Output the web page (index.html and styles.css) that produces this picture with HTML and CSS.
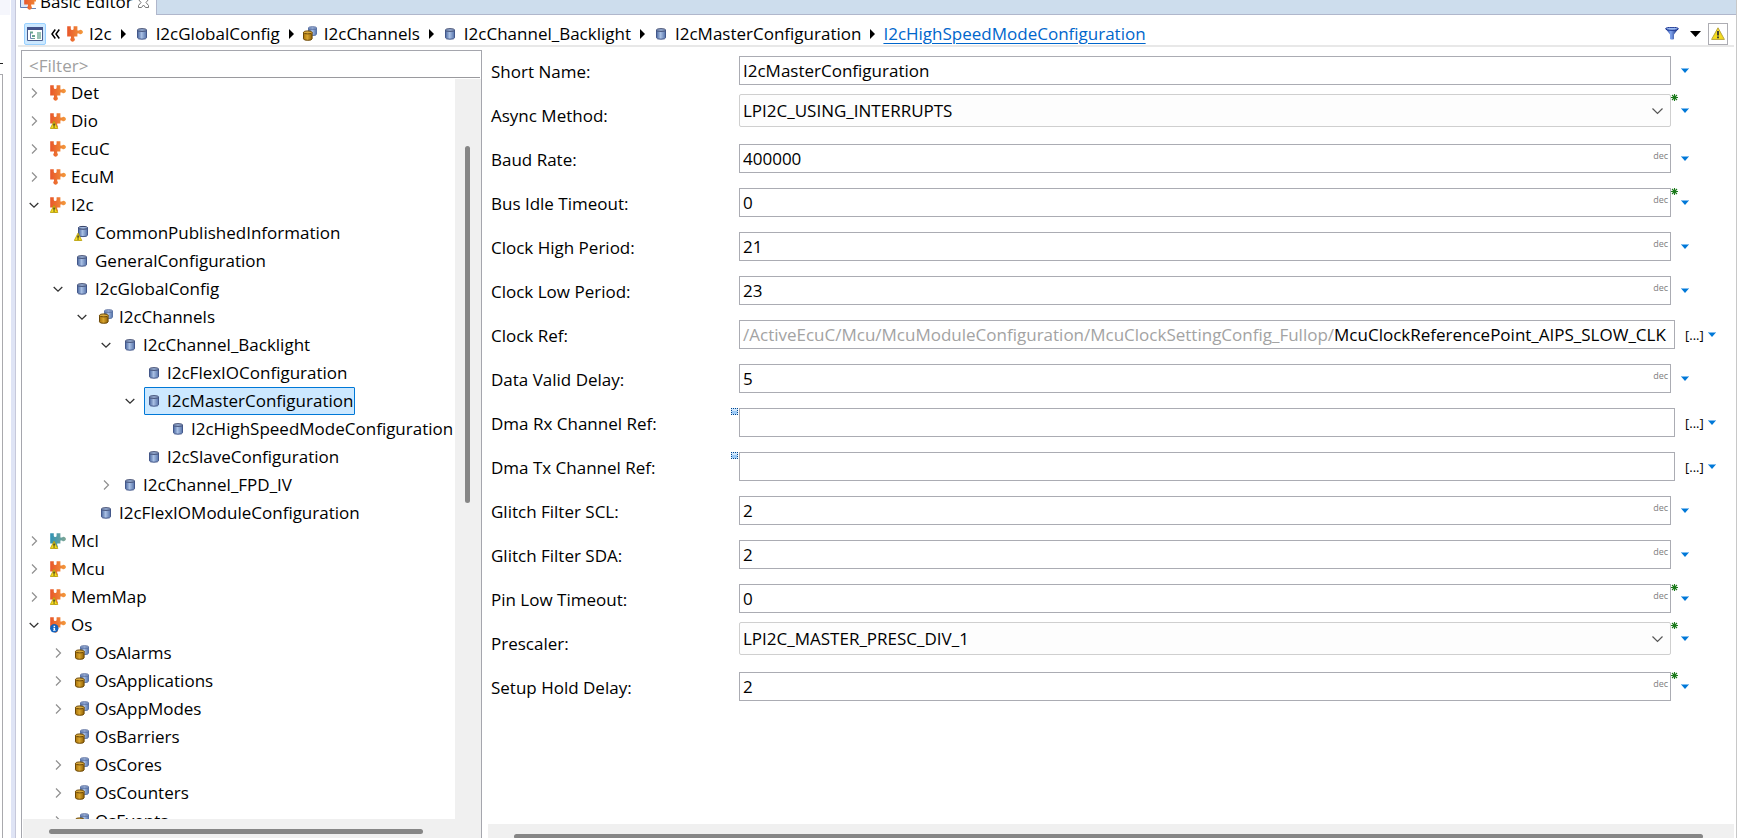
FILE: index.html
```
<!DOCTYPE html>
<html lang="en">
<head>
  <meta charset="UTF-8" />
  <title>Basic Editor</title>
  <link rel="stylesheet" href="styles.css">
</head>
<body>
  <!-- icon set -->
  <svg class="defs" width="0" height="0" aria-hidden="true">
    <defs>
      <linearGradient id="g-orange" x1="0" x2="1"><stop offset="0" stop-color="#e8562a"/><stop offset="1" stop-color="#f39a3c"/></linearGradient>
      <linearGradient id="g-teal" x1="0" x2="1"><stop offset="0" stop-color="#2f93b5"/><stop offset="1" stop-color="#7fa694"/></linearGradient>
      <linearGradient id="g-blue" x1="0" x2="1"><stop offset="0" stop-color="#4a679f"/><stop offset="0.45" stop-color="#a9c0e4"/><stop offset="1" stop-color="#5673aa"/></linearGradient>
      <linearGradient id="g-gold" x1="0" x2="1"><stop offset="0" stop-color="#a87208"/><stop offset="0.45" stop-color="#d9a52f"/><stop offset="1" stop-color="#916206"/></linearGradient>
      <linearGradient id="g-funnel" x1="0" x2="1"><stop offset="0" stop-color="#16308f"/><stop offset="0.4" stop-color="#7fa4ee"/><stop offset="1" stop-color="#0c1f6e"/></linearGradient>
      <path id="puzzle" d="M0.2 0.3h3.6v2.4a1.4 1.4 0 0 0 2.8 0V0.3h3.800v4.200h1.600a2.200 2.200 0 1 1 0 3h-1.600v3H7.200v1.500a2.200 2.200 0 1 1-3.200 0v-1.500H0.200z"/>
      <g id="warn">
        <path d="M4 8.2 7.8 15.5H0.3z" fill="#f5dc1e" stroke="#b59b00" stroke-width="0.8"/>
        <path d="M3.4 10.4h1.3v2.4H3.4zM3.4 13.4h1.3v1.2H3.4z" fill="#222"/>
      </g>
    </defs>
    <symbol id="i-module" viewBox="0 0 16 16"><use href="#puzzle" fill="url(#g-orange)"/></symbol>
    <symbol id="i-module-warn" viewBox="0 0 16 16"><use href="#puzzle" fill="url(#g-orange)"/><use href="#warn"/></symbol>
    <symbol id="i-module-teal" viewBox="0 0 16 16"><use href="#puzzle" fill="url(#g-teal)"/><use href="#warn"/></symbol>
    <symbol id="i-module-info" viewBox="0 0 16 16">
      <use href="#puzzle" fill="url(#g-orange)"/>
      <circle cx="4.3" cy="11.3" r="4.2" fill="#1262bd"/>
      <path d="M3.6 8.8h1.5v1.2H3.6zM3.2 10.7h1.9v2.2h.5v.9H3.1v-.9h.5v-1.3h-.4z" fill="#fff"/>
    </symbol>
    <symbol id="i-item" viewBox="0 0 16 16">
      <path d="M3.5 4v7.8q0 1.400 4.500 1.400t4.500-1.400V4z" fill="url(#g-blue)" stroke="#43578a"/>
      <ellipse cx="8" cy="4" rx="4.500" ry="1.300" fill="#a3bbe0" stroke="#343f66"/>
    </symbol>
    <symbol id="i-item-warn" viewBox="0 0 16 16">
      <path d="M4.500 2.600v7.600q0 1.400 4.500 1.400t4.500-1.400V2.600z" fill="url(#g-blue)" stroke="#43578a"/>
      <ellipse cx="9" cy="2.800" rx="4.500" ry="1.400" fill="#a3bbe0" stroke="#343f66"/>
      <use href="#warn"/>
    </symbol>
    <symbol id="i-group" viewBox="0 0 16 16">
      <path d="M6.500 2v6.200q0 1.300 4 1.300t4-1.300V2z" fill="url(#g-blue)" stroke="#5b76a8"/>
      <ellipse cx="10.500" cy="2" rx="4" ry="1.200" fill="#a9c1e6" stroke="#4a5f93"/>
      <path d="M1.500 6.500v6.300q0 1.500 4.300 1.500t4.300-1.500V6.500z" fill="url(#g-gold)" stroke="#6b4706"/>
      <ellipse cx="5.800" cy="6.400" rx="4.300" ry="1.500" fill="#d9a93a" stroke="#6b4706"/>
    </symbol>
    <symbol id="i-right" viewBox="0 0 10 10"><path d="M3 0.5 7.5 5 3 9.5" fill="none" stroke="#8f8f8f" stroke-width="1.2"/></symbol>
    <symbol id="i-down" viewBox="0 0 10 10"><path d="M0.7 3 5 7.2 9.3 3" fill="none" stroke="#333" stroke-width="1.3"/></symbol>
    <symbol id="i-sep" viewBox="0 0 5 10"><path d="M0 0v10l5-5z"/></symbol>
    <symbol id="i-menu" viewBox="0 0 8 5"><path d="M0 0h8v1H0z" fill="#7fbdf0"/><path d="M0.5 1h7L4 5z" fill="#0078d7"/></symbol>
    <symbol id="i-star" viewBox="0 0 7 7"><path d="M3.5 0v7M0 3.5h7M1 1l5 5M6 1 1 6" stroke="#1b7a1b" stroke-width="1.1"/></symbol>
    <symbol id="i-optional" viewBox="0 0 7 7">
      <path d="M0 0h7v7H0z" fill="#cfe6fc"/>
      <path d="M1 3h5v3H1z" fill="#9ccbf8"/>
      <path d="M0 0h1v1H0zM2 0h1v1H2zM4 0h1v1H4zM6 0h1v1H6zM0 2h1v1H0zM6 2h1v1H6zM0 4h1v1H0zM6 4h1v1H6zM0 6h1v1H0zM2 6h1v1H2zM4 6h1v1H4zM6 6h1v1H6z" fill="#00478f"/>
    </symbol>
  </svg>

  <div class="app">
    <div class="side-view">
      <div class="side-tab"></div>
      <div class="side-mark"></div>
      <div class="side-body"></div>
    </div>
    <main class="editor">
      <div class="tabs">
        <div class="tab">
          <svg width="16" height="16" viewBox="0 0 16 16"><path d="M0.500 1.500h10v12h-10z" fill="#dbe8f8" stroke="#5f7db5"/><path d="M11 14.500h5" stroke="#6b86b5"/><use href="#puzzle" x="4" fill="url(#g-orange)"/></svg>
          <span>Basic Editor</span>
          <button class="close" aria-label="Close"><svg width="11" height="11" viewBox="0 0 11 11"><path d="M0.5 0.5h3l2 2.5 2-2.5h3v2L8 5.500l2.500 3v2h-3l-2-2.500-2 2.500h-3v-2L3 5.500 0.500 2.500z" fill="#fff" stroke="#777"/></svg></button>
        </div>
      </div>

      <nav class="crumbs">
        <button class="tree-toggle" aria-label="Show tree">
          <svg width="16" height="14" viewBox="0 0 16 14"><path d="M0.5 0.500h15v13h-15z" fill="#fff" stroke="#4a5c8c"/><path d="M0 0h16v3H0z" fill="#42528a"/><path d="M3 4.500h3v2H3zM5 8h3v2H5zM5 11h3v1H5z" fill="#6aa58e"/><path d="M10 5h4v7h-4z" fill="#9ac3b4"/><path d="M3.500 6v5.500H6" fill="none" stroke="#6f86b0"/></svg>
        </button>
        <button class="back" aria-label="Back"><svg width="9" height="10" viewBox="0 0 9 10"><path d="M4.300 0.500 1 5l3.300 4.500M8.300 0.500 5 5l3.300 4.500" fill="none" stroke="#000" stroke-width="1.500"/></svg></button>
        <span class="crumb"><svg class="icon"><use href="#i-module"/></svg>I2c</span>
        <svg class="sep"><use href="#i-sep"/></svg>
        <span class="crumb"><svg class="icon"><use href="#i-item"/></svg>I2cGlobalConfig</span>
        <svg class="sep"><use href="#i-sep"/></svg>
        <span class="crumb"><svg class="icon"><use href="#i-group"/></svg>I2cChannels</span>
        <svg class="sep"><use href="#i-sep"/></svg>
        <span class="crumb"><svg class="icon"><use href="#i-item"/></svg>I2cChannel_Backlight</span>
        <svg class="sep"><use href="#i-sep"/></svg>
        <span class="crumb"><svg class="icon"><use href="#i-item"/></svg>I2cMasterConfiguration</span>
        <svg class="sep"><use href="#i-sep"/></svg>
        <a href="#">I2cHighSpeedModeConfiguration</a>
        <div class="tools">
          <button aria-label="Filter"><svg width="14" height="13" viewBox="0 0 14 13"><path d="M0.500 1.500 5 7.500V12q2 1 4 0V7.500l4.500-6z" fill="url(#g-funnel)"/><ellipse cx="7" cy="1.800" rx="6.500" ry="1.500" fill="#9dbcf2" stroke="#16308f"/></svg></button>
          <button aria-label="View menu"><svg width="11" height="6" viewBox="0 0 11 6"><path d="M0 0h11L5.500 6z"/></svg></button>
          <button class="problems" aria-label="Problems"><svg width="14" height="13" viewBox="0 0 14 13"><path d="M7 0.800 13.400 12.400H0.600z" fill="#f5dc1e" stroke="#b8a53c" stroke-linejoin="round"/><path d="M6.100 4h1.800v4.500H6.100zM6.100 9.500h1.800v1.700H6.100z" fill="#333"/></svg></button>
        </div>
      </nav>

      <div class="content">
        <section class="tree-pane">
          <input class="filter" type="text" placeholder="&lt;Filter&gt;" aria-label="Filter">
          <div class="tree-area">
            <ul class="tree">
              <li><div class="row"><button aria-label="Expand"><svg><use href="#i-right"/></svg></button><span class="node"><svg class="icon"><use href="#i-module"/></svg>Det</span></div></li>
              <li><div class="row"><button aria-label="Expand"><svg><use href="#i-right"/></svg></button><span class="node"><svg class="icon"><use href="#i-module-warn"/></svg>Dio</span></div></li>
              <li><div class="row"><button aria-label="Expand"><svg><use href="#i-right"/></svg></button><span class="node"><svg class="icon"><use href="#i-module"/></svg>EcuC</span></div></li>
              <li><div class="row"><button aria-label="Expand"><svg><use href="#i-right"/></svg></button><span class="node"><svg class="icon"><use href="#i-module"/></svg>EcuM</span></div></li>
              <li><div class="row"><button aria-label="Collapse"><svg><use href="#i-down"/></svg></button><span class="node"><svg class="icon"><use href="#i-module-warn"/></svg>I2c</span></div>
                <ul>
                  <li><div class="row leaf"><span class="node"><svg class="icon"><use href="#i-item-warn"/></svg>CommonPublishedInformation</span></div></li>
                  <li><div class="row leaf"><span class="node"><svg class="icon"><use href="#i-item"/></svg>GeneralConfiguration</span></div></li>
                  <li><div class="row"><button aria-label="Collapse"><svg><use href="#i-down"/></svg></button><span class="node"><svg class="icon"><use href="#i-item"/></svg>I2cGlobalConfig</span></div>
                    <ul>
                      <li><div class="row"><button aria-label="Collapse"><svg><use href="#i-down"/></svg></button><span class="node"><svg class="icon"><use href="#i-group"/></svg>I2cChannels</span></div>
                        <ul>
                          <li><div class="row"><button aria-label="Collapse"><svg><use href="#i-down"/></svg></button><span class="node"><svg class="icon"><use href="#i-item"/></svg>I2cChannel_Backlight</span></div>
                            <ul>
                              <li><div class="row leaf"><span class="node"><svg class="icon"><use href="#i-item"/></svg>I2cFlexIOConfiguration</span></div></li>
                              <li><div class="row"><button aria-label="Collapse"><svg><use href="#i-down"/></svg></button><span class="node selected"><svg class="icon"><use href="#i-item"/></svg>I2cMasterConfiguration</span></div>
                                <ul>
                                  <li><div class="row leaf"><span class="node"><svg class="icon"><use href="#i-item"/></svg>I2cHighSpeedModeConfiguration</span></div></li>
                                </ul>
                              </li>
                              <li><div class="row leaf"><span class="node"><svg class="icon"><use href="#i-item"/></svg>I2cSlaveConfiguration</span></div></li>
                            </ul>
                          </li>
                          <li><div class="row"><button aria-label="Expand"><svg><use href="#i-right"/></svg></button><span class="node"><svg class="icon"><use href="#i-item"/></svg>I2cChannel_FPD_IV</span></div></li>
                        </ul>
                      </li>
                      <li><div class="row leaf"><span class="node"><svg class="icon"><use href="#i-item"/></svg>I2cFlexIOModuleConfiguration</span></div></li>
                    </ul>
                  </li>
                </ul>
              </li>
              <li><div class="row"><button aria-label="Expand"><svg><use href="#i-right"/></svg></button><span class="node"><svg class="icon"><use href="#i-module-teal"/></svg>Mcl</span></div></li>
              <li><div class="row"><button aria-label="Expand"><svg><use href="#i-right"/></svg></button><span class="node"><svg class="icon"><use href="#i-module-warn"/></svg>Mcu</span></div></li>
              <li><div class="row"><button aria-label="Expand"><svg><use href="#i-right"/></svg></button><span class="node"><svg class="icon"><use href="#i-module-warn"/></svg>MemMap</span></div></li>
              <li><div class="row"><button aria-label="Collapse"><svg><use href="#i-down"/></svg></button><span class="node"><svg class="icon"><use href="#i-module-info"/></svg>Os</span></div>
                <ul>
                  <li><div class="row"><button aria-label="Expand"><svg><use href="#i-right"/></svg></button><span class="node"><svg class="icon"><use href="#i-group"/></svg>OsAlarms</span></div></li>
                  <li><div class="row"><button aria-label="Expand"><svg><use href="#i-right"/></svg></button><span class="node"><svg class="icon"><use href="#i-group"/></svg>OsApplications</span></div></li>
                  <li><div class="row"><button aria-label="Expand"><svg><use href="#i-right"/></svg></button><span class="node"><svg class="icon"><use href="#i-group"/></svg>OsAppModes</span></div></li>
                  <li><div class="row leaf"><span class="node"><svg class="icon"><use href="#i-group"/></svg>OsBarriers</span></div></li>
                  <li><div class="row"><button aria-label="Expand"><svg><use href="#i-right"/></svg></button><span class="node"><svg class="icon"><use href="#i-group"/></svg>OsCores</span></div></li>
                  <li><div class="row"><button aria-label="Expand"><svg><use href="#i-right"/></svg></button><span class="node"><svg class="icon"><use href="#i-group"/></svg>OsCounters</span></div></li>
                  <li><div class="row"><button aria-label="Expand"><svg><use href="#i-right"/></svg></button><span class="node"><svg class="icon"><use href="#i-group"/></svg>OsEvents</span></div></li>
                </ul>
              </li>
            </ul>
            <div class="vscroll"><div class="thumb"></div></div>
          </div>
          <div class="hscroll"><div class="thumb"></div></div>
        </section>

        <section class="form-pane">
          <form class="form">
            <div class="line">
              <label for="short-name">Short Name:</label>
              <div class="field"><input id="short-name" type="text" value="I2cMasterConfiguration"></div>
              <div class="actions"><button type="button" aria-label="Menu"><svg><use href="#i-menu"/></svg></button></div>
            </div>
            <div class="line combo">
              <label for="async">Async Method:</label>
              <div class="field"><select id="async"><option>LPI2C_USING_INTERRUPTS</option></select><svg class="chevron" viewBox="0 0 11 7"><path d="M0.500 0.500 5.500 5.500l5-5"/></svg><svg class="star"><use href="#i-star"/></svg></div>
              <div class="actions"><button type="button" aria-label="Menu"><svg><use href="#i-menu"/></svg></button></div>
            </div>
            <div class="line">
              <label for="baud">Baud Rate:</label>
              <div class="field"><input id="baud" type="text" value="400000"><span class="dec">dec</span></div>
              <div class="actions"><button type="button" aria-label="Menu"><svg><use href="#i-menu"/></svg></button></div>
            </div>
            <div class="line">
              <label for="idle">Bus Idle Timeout:</label>
              <div class="field"><input id="idle" type="text" value="0"><span class="dec">dec</span><svg class="star"><use href="#i-star"/></svg></div>
              <div class="actions"><button type="button" aria-label="Menu"><svg><use href="#i-menu"/></svg></button></div>
            </div>
            <div class="line">
              <label for="high">Clock High Period:</label>
              <div class="field"><input id="high" type="text" value="21"><span class="dec">dec</span></div>
              <div class="actions"><button type="button" aria-label="Menu"><svg><use href="#i-menu"/></svg></button></div>
            </div>
            <div class="line">
              <label for="low">Clock Low Period:</label>
              <div class="field"><input id="low" type="text" value="23"><span class="dec">dec</span></div>
              <div class="actions"><button type="button" aria-label="Menu"><svg><use href="#i-menu"/></svg></button></div>
            </div>
            <div class="line ref">
              <label for="clock-ref">Clock Ref:</label>
              <div class="field"><span class="path">/ActiveEcuC/Mcu/McuModuleConfiguration/McuClockSettingConfig_Fullop/</span><input id="clock-ref" type="text" value="McuClockReferencePoint_AIPS_SLOW_CLK"></div>
              <div class="actions"><button type="button" class="browse">[...]</button><button type="button" aria-label="Menu"><svg><use href="#i-menu"/></svg></button></div>
            </div>
            <div class="line">
              <label for="valid">Data Valid Delay:</label>
              <div class="field"><input id="valid" type="text" value="5"><span class="dec">dec</span></div>
              <div class="actions"><button type="button" aria-label="Menu"><svg><use href="#i-menu"/></svg></button></div>
            </div>
            <div class="line ref">
              <label for="dma-rx">Dma Rx Channel Ref:</label>
              <div class="field"><svg class="optional"><use href="#i-optional"/></svg><input id="dma-rx" type="text"></div>
              <div class="actions"><button type="button" class="browse">[...]</button><button type="button" aria-label="Menu"><svg><use href="#i-menu"/></svg></button></div>
            </div>
            <div class="line ref">
              <label for="dma-tx">Dma Tx Channel Ref:</label>
              <div class="field"><svg class="optional"><use href="#i-optional"/></svg><input id="dma-tx" type="text"></div>
              <div class="actions"><button type="button" class="browse">[...]</button><button type="button" aria-label="Menu"><svg><use href="#i-menu"/></svg></button></div>
            </div>
            <div class="line">
              <label for="scl">Glitch Filter SCL:</label>
              <div class="field"><input id="scl" type="text" value="2"><span class="dec">dec</span></div>
              <div class="actions"><button type="button" aria-label="Menu"><svg><use href="#i-menu"/></svg></button></div>
            </div>
            <div class="line">
              <label for="sda">Glitch Filter SDA:</label>
              <div class="field"><input id="sda" type="text" value="2"><span class="dec">dec</span></div>
              <div class="actions"><button type="button" aria-label="Menu"><svg><use href="#i-menu"/></svg></button></div>
            </div>
            <div class="line">
              <label for="pin-low">Pin Low Timeout:</label>
              <div class="field"><input id="pin-low" type="text" value="0"><span class="dec">dec</span><svg class="star"><use href="#i-star"/></svg></div>
              <div class="actions"><button type="button" aria-label="Menu"><svg><use href="#i-menu"/></svg></button></div>
            </div>
            <div class="line combo">
              <label for="prescaler">Prescaler:</label>
              <div class="field"><select id="prescaler"><option>LPI2C_MASTER_PRESC_DIV_1</option></select><svg class="chevron" viewBox="0 0 11 7"><path d="M0.500 0.500 5.500 5.500l5-5"/></svg><svg class="star"><use href="#i-star"/></svg></div>
              <div class="actions"><button type="button" aria-label="Menu"><svg><use href="#i-menu"/></svg></button></div>
            </div>
            <div class="line">
              <label for="hold">Setup Hold Delay:</label>
              <div class="field"><input id="hold" type="text" value="2"><span class="dec">dec</span><svg class="star"><use href="#i-star"/></svg></div>
              <div class="actions"><button type="button" aria-label="Menu"><svg><use href="#i-menu"/></svg></button></div>
            </div>
          </form>
          <div class="hscroll"><div class="thumb"></div></div>
        </section>
      </div>
    </main>
  </div>
</body>
</html>
```
FILE: styles.css
```
* {
  box-sizing: border-box;
}

body {
  margin: 0;
  height: 100vh;
  overflow: hidden;
  background: #fff;
  color: #000;
  font: 17px/28px 'Open Sans', 'Segoe UI', sans-serif;
}

button, input, select {
  margin: 0;
  padding: 0;
  border: none;
  border-radius: 0;
  background: none;
  color: inherit;
  font: inherit;
}

input:focus, select:focus {
  outline: none;
}

svg {
  display: block;
  flex: none;
}

.defs {
  position: absolute;
}

.icon {
  width: 16px;
  height: 16px;
}

.app {
  display: flex;
  height: 100vh;
}

/* edge of the neighbouring view */
.side-view {
  width: 16px;
  flex: none;
  display: flex;
  flex-direction: column;
  border-right: 1px solid #c6c8da;
  background: linear-gradient(to right, #fff 11px, #dfe4f5 11px);
}

.side-tab {
  width: 10px;
  height: 15px;
  background: #f5f6fc;
}

.side-mark {
  width: 3px;
  height: 49px;
  border-bottom: 1px solid #222;
}

.side-body {
  width: 3px;
  flex: 1;
  margin-top: 10px;
  border: 1px solid #a9a9ad;
  border-width: 1px 1px 0 0;
}

.editor {
  flex: 1;
  min-width: 0;
  display: flex;
  flex-direction: column;
  border-right: 1px solid #c8c8c8;
}

.tabs {
  height: 15px;
  flex: none;
  display: flex;
  align-items: flex-end;
  overflow: hidden;
  background: linear-gradient(#cddded 14px, #b0b7cc 14px);
}

.tab {
  display: flex;
  align-items: center;
  height: 26px;
  width: 141px;
  padding: 0 7px 0 4px;
  border-right: 1px solid #b0b7cc;
  background: #fff;
  gap: 4px;
}

.tab .close {
  margin-left: auto;
}

.crumbs {
  display: flex;
  align-items: center;
  height: 32px;
  flex: none;
  margin: 0 2px;
  padding: 7px 6px 0 6px;
  border-bottom: 2px solid #e8e8e8;
  white-space: nowrap;
}

.crumb {
  display: flex;
  align-items: center;
  gap: 6px;
}

.sep {
  width: 5px;
  height: 10px;
  margin: 0 8px 0 9px;
}

.crumbs a {
  color: #0066cc;
  text-decoration: underline;
  text-underline-offset: 3px;
}

.tree-toggle {
  display: flex;
  align-items: center;
  justify-content: center;
  width: 22px;
  height: 22px;
  border: 1px solid #99d1ff;
  border-radius: 2px;
  background: #cce8ff;
}

.back {
  margin: 0 7px 0 5px;
}

.tools {
  display: flex;
  align-items: center;
  gap: 11px;
  margin-left: auto;
}

.problems {
  display: flex;
  align-items: center;
  justify-content: center;
  width: 20px;
  height: 22px;
  margin-left: -4px;
  border: 1px solid #adadb3;
}

.content {
  flex: 1;
  min-height: 0;
  display: flex;
  padding: 3px 2px 0 5px;
}

.tree-pane {
  width: 461px;
  flex: none;
  display: flex;
  flex-direction: column;
  border: 1px solid #a5a6ad;
  border-bottom: none;
}

.filter {
  height: 27px;
  flex: none;
  margin: 0 1px 1px;
  padding: 3px 6px 0;
  border-bottom: 1px solid #9a9a9e;
}

.filter::placeholder {
  color: #a0a0a0;
  opacity: 1;
}

.tree-area {
  flex: 1;
  min-height: 0;
  display: flex;
}

.tree, .tree ul {
  margin: 0;
  padding: 0;
  list-style: none;
}

.tree {
  flex: 1;
  min-width: 0;
  overflow: hidden;
}

.tree ul {
  padding-left: 24px;
}

.row {
  display: flex;
  height: 28px;
  white-space: nowrap;
}

.row button {
  display: flex;
  align-items: center;
  width: 26px;
  flex: none;
  padding-left: 7px;
}

.row button svg {
  width: 10px;
  height: 10px;
}

.row.leaf {
  padding-left: 26px;
}

.node {
  display: flex;
  align-items: center;
  gap: 5px;
  padding: 0 1px;
  border: 1px solid transparent;
  line-height: 26px;
}

.node.selected {
  border-color: #0078d7;
  border-radius: 1px;
  background: #cce8ff;
}

.thumb {
  background: #868686;
  border-radius: 3px;
}

.vscroll {
  width: 26px;
  flex: none;
  padding: 67px 0 0 10px;
  background: #f0f0f0;
}

.vscroll .thumb {
  width: 5px;
  height: 357px;
}

.hscroll {
  flex: none;
  background: #f0f0f0;
}

.tree-pane .hscroll {
  height: 19px;
  margin-left: 1px;
  padding: 10px 58px 0 26px;
}

.hscroll .thumb {
  height: 5px;
}

.form-pane {
  flex: 1;
  min-width: 0;
  display: flex;
  flex-direction: column;
}

.form {
  flex: 1;
  min-height: 0;
  overflow: hidden;
  padding-left: 9px;
}

.form-pane .hscroll {
  height: 14px;
  margin-left: 6px;
  padding: 10px 31px 0 26px;
  overflow: hidden;
}

.line {
  display: flex;
  align-items: flex-start;
  height: 44px;
}

.line label {
  width: 248px;
  flex: none;
  line-height: 43px;
}

.field {
  position: relative;
  flex: 1;
  min-width: 0;
  display: flex;
  height: 29px;
  margin-top: 6px;
  padding-left: 3px;
  border: 1px solid #abacb3;
  white-space: nowrap;
}

.field input, .field select {
  flex: 1;
  min-width: 0;
}

.field .path {
  color: #a3a3a3;
}

.combo .field {
  height: 33px;
  margin-top: 0;
  border-color: #cfcfcf;
  border-radius: 2px;
  background: #fdfdfd;
}

.combo select {
  appearance: none;
}

.chevron {
  position: absolute;
  right: 7px;
  top: 13px;
  width: 11px;
  height: 7px;
  pointer-events: none;
}

.chevron path {
  fill: none;
  stroke: #555;
  stroke-width: 1.2;
}

.dec {
  padding-right: 2px;
  color: #808080;
  font-size: 9px;
  line-height: 22px;
}

.star {
  position: absolute;
  top: -1px;
  right: -8px;
  width: 7px;
  height: 7px;
}

.optional {
  position: absolute;
  top: -1px;
  left: -9px;
  width: 7px;
  height: 7px;
}

.actions {
  display: flex;
  align-items: center;
  width: 63px;
  flex: none;
  height: 29px;
  margin-top: 6px;
  padding-left: 10px;
  gap: 4px;
}

.combo .actions {
  height: 33px;
  margin-top: 0;
}

.ref .actions {
  width: 59px;
}

.actions svg {
  width: 8px;
  height: 5px;
}

.browse {
  font-size: 13px;
  line-height: 18px;
}
```
